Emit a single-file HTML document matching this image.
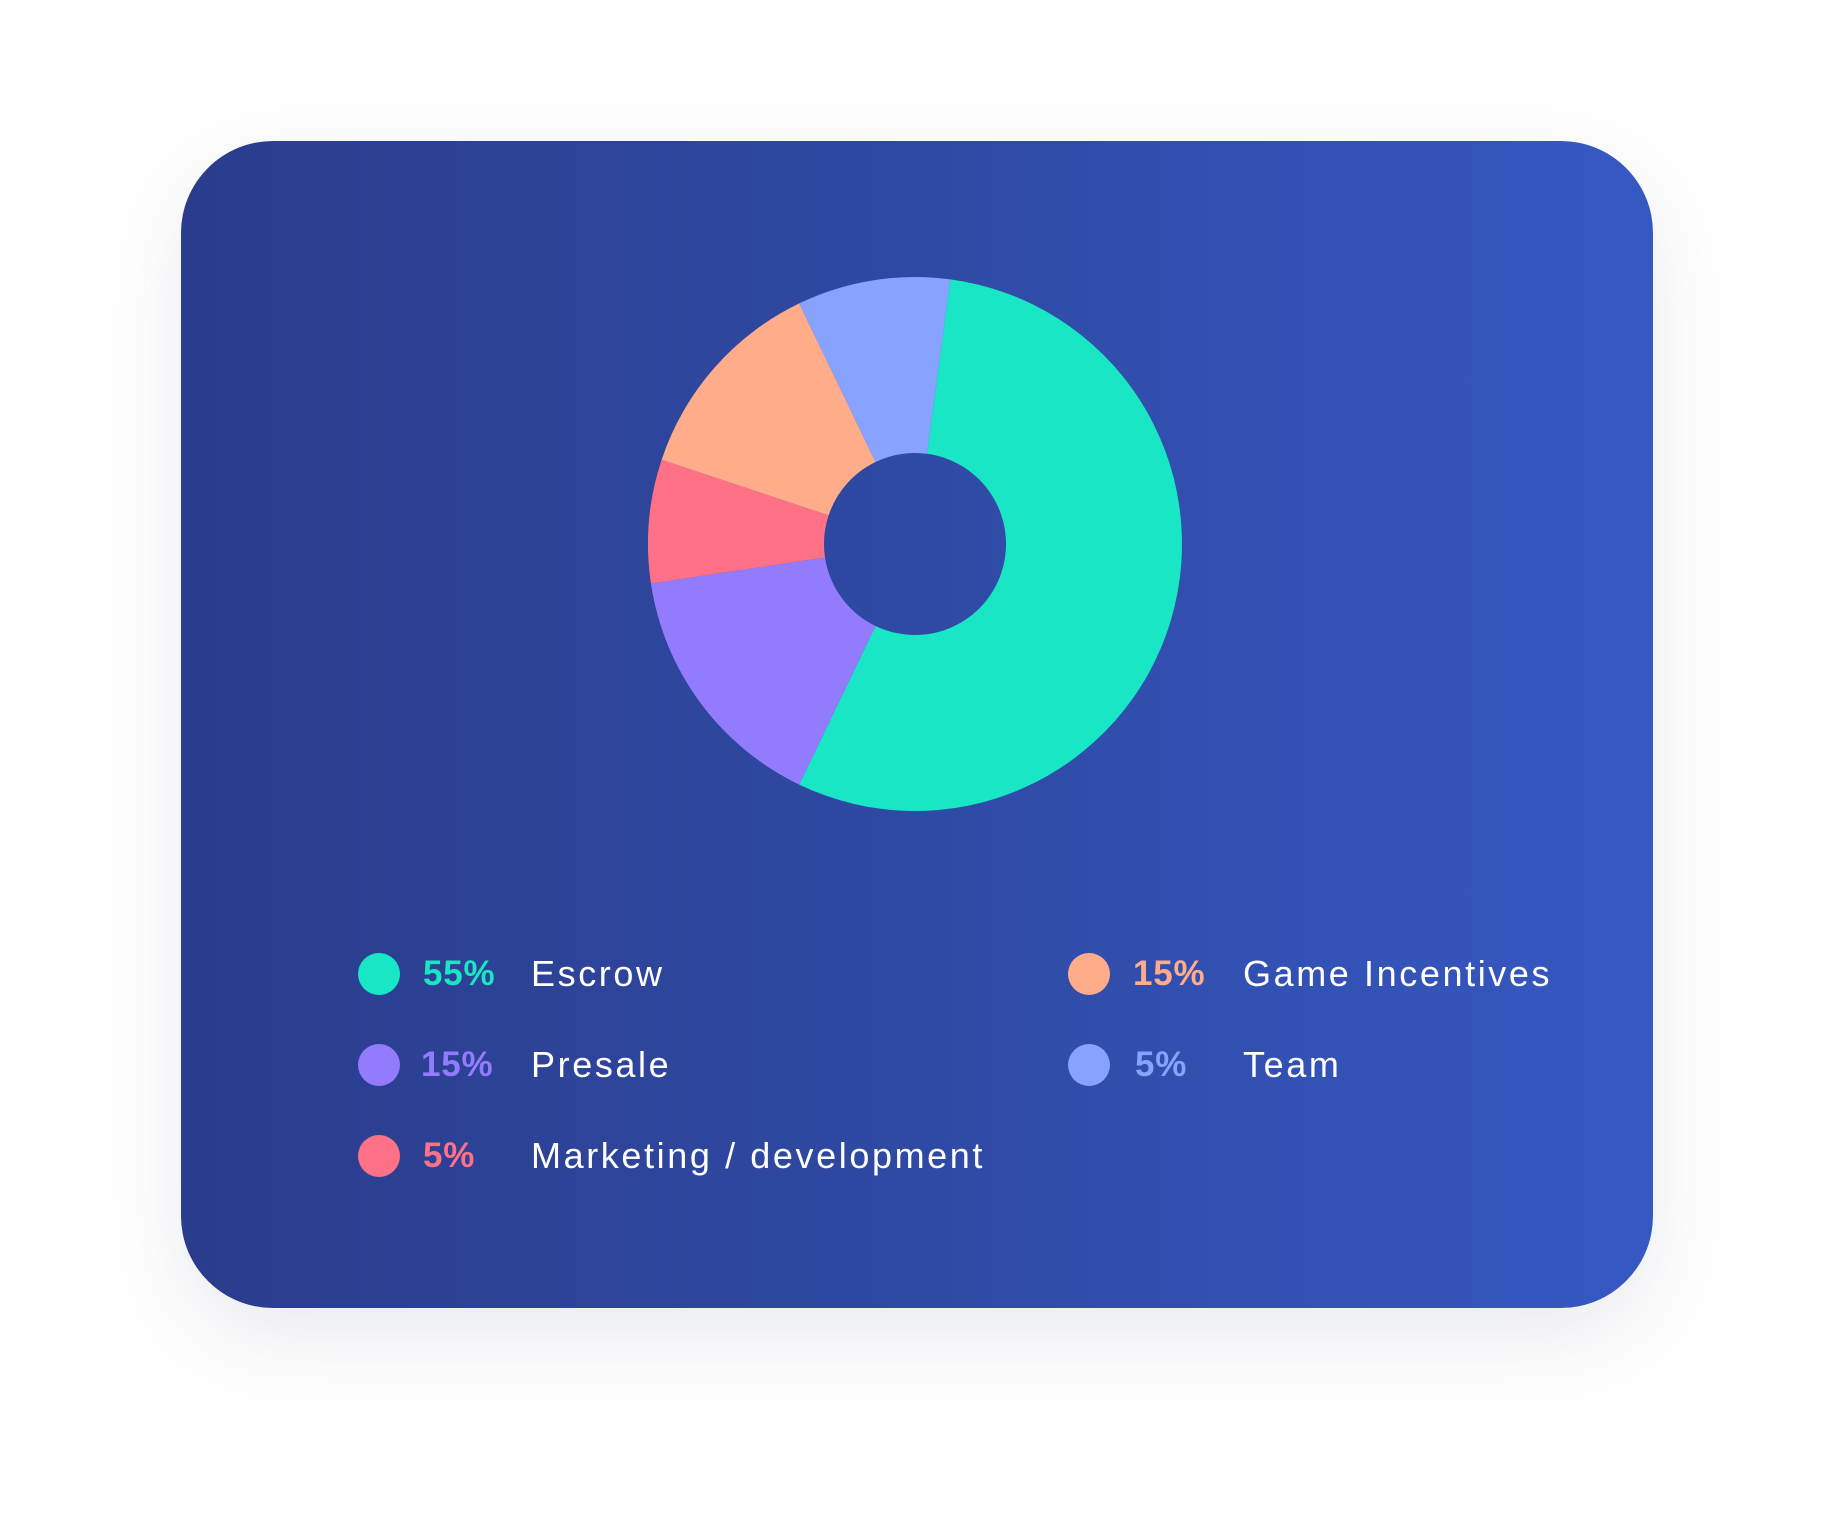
<!DOCTYPE html>
<html><head><style>
html,body{margin:0;padding:0;width:1829px;height:1520px;background:#fff;overflow:hidden;}
.card{position:absolute;left:181px;top:141px;width:1480px;height:1167px;border-radius:92px;
background:linear-gradient(90deg,#2a3c8c 0%,#2f4aa4 50%,#3658c3 100%);
box-shadow:0 30px 90px rgba(40,50,90,0.10);}
.dot{position:absolute;width:42px;height:42px;border-radius:50%;}
.t{position:absolute;font-family:"Liberation Sans",sans-serif;font-size:35px;line-height:40px;height:40px;white-space:nowrap;}
.p{font-weight:bold;letter-spacing:0.8px;}
.l{color:#fff;letter-spacing:2.6px;font-size:36px;}
</style></head><body>
<div class="card" style="width:1472px"></div>
<svg style="position:absolute;left:0;top:0" width="1829" height="1520" id="s"></svg>
<script>
var cx=915,cy=544,R=267,r=91;
var segs=[[7.6,205.7,'#19e6c4'],[205.7,261.5,'#937bfe'],[261.5,288.4,'#fe7186'],[288.4,334.3,'#ffac8a'],[334.3,367.6,'#87a3ff']];
function pt(a,rad){a=a*Math.PI/180;return [cx+rad*Math.sin(a),cy-rad*Math.cos(a)];}
var h='';
segs.forEach(function(s){var a=s[0],b=s[1],lg=(b-a)>180?1:0;
var p1=pt(a,R),p2=pt(b,R),p3=pt(b,r),p4=pt(a,r);
h+='<path fill="'+s[2]+'" d="M'+p1+' A'+R+','+R+' 0 '+lg+' 1 '+p2+' L'+p3+' A'+r+','+r+' 0 '+lg+' 0 '+p4+' Z"/>';});
document.getElementById('s').innerHTML=h;
</script>
<div class="dot" style="left:358px;top:953px;background:#19e6c4"></div>
<div class="t p" style="left:423px;top:954px;color:#19e6c4">55%</div>
<div class="t l" style="left:531px;top:954px">Escrow</div>
<div class="dot" style="left:358px;top:1044px;background:#937bfe"></div>
<div class="t p" style="left:421px;top:1045px;color:#937bfe">15%</div>
<div class="t l" style="left:531px;top:1045px">Presale</div>
<div class="dot" style="left:358px;top:1135px;background:#fe7186"></div>
<div class="t p" style="left:423px;top:1136px;color:#fe7186">5%</div>
<div class="t l" style="left:531px;top:1136px">Marketing / development</div>
<div class="dot" style="left:1068px;top:953px;background:#ffac8a"></div>
<div class="t p" style="left:1133px;top:954px;color:#ffac8a">15%</div>
<div class="t l" style="left:1243px;top:954px">Game Incentives</div>
<div class="dot" style="left:1068px;top:1044px;background:#87a3ff"></div>
<div class="t p" style="left:1135px;top:1045px;color:#87a3ff">5%</div>
<div class="t l" style="left:1243px;top:1045px">Team</div>
</body></html>
